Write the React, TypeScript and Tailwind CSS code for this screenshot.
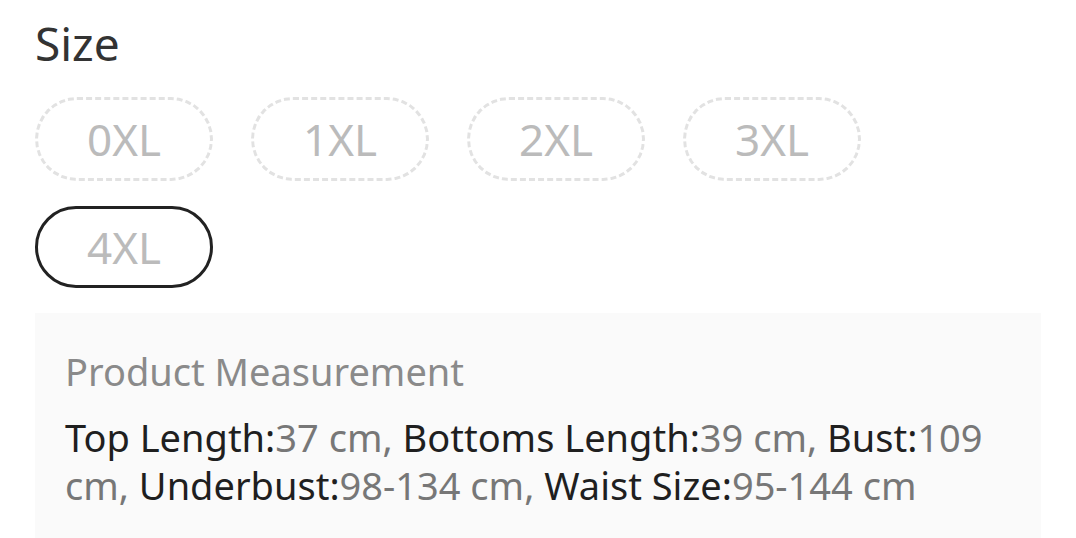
import React from "react";

const sizes = ["0XL", "1XL", "2XL", "3XL", "4XL"];

const parts: { label: string; value: string[] }[] = [
  { label: "Top Length:", value: ["37 cm,"] },
  { label: "Bottoms Length:", value: ["39 cm,"] },
  { label: "Bust:", value: ["109", "cm,"] },
  { label: "Underbust:", value: ["98-134 cm,"] },
  { label: "Waist Size:", value: ["95-144 cm"] },
];

export default function App() {
  return (
    <div
      className="w-[1076px] h-[538px] overflow-hidden bg-white pl-[35px] pr-[35px]"
      style={{ fontFamily: '"Noto Sans", "Open Sans", sans-serif' }}
    >
      <div className="pt-[12px] text-[46px] leading-[62px] text-[#333333]">Size</div>
      <div className="mt-[23px] flex flex-wrap gap-x-[38px] gap-y-[25px] w-[900px]">
        {sizes.map((s, i) => (
          <div
            key={s}
            className={
              i === 4
                ? "w-[178px] h-[82px] rounded-full border-[3px] border-solid border-[#222222] flex items-center justify-center text-[44px] text-[#bbbbbb]"
                : "w-[178px] h-[84px] rounded-full border-[3px] border-dashed border-[#e2e2e2] flex items-center justify-center text-[44px] text-[#bbbbbb]"
            }
          >
            {s}
          </div>
        ))}
      </div>
      <div className="mt-[25px] bg-[#fafafa] w-[1006px] h-[260px] px-[30px] pt-[30px]">
        <div className="text-[38px] leading-[56px] text-[#8a8a8a]">Product Measurement</div>
        <div className="mt-[14px] text-[38px] leading-[48px] text-[#777777]">
          {parts.map((p, i) => (
            <React.Fragment key={p.label}>
              <span className="text-[#1f1f1f]">{p.label}</span>
              {p.value.map((v, j) => (
                <React.Fragment key={j}>
                  <span>{v}</span>
                  {i < parts.length - 1 || j < p.value.length - 1 ? " " : null}
                </React.Fragment>
              ))}
            </React.Fragment>
          ))}
        </div>
      </div>
    </div>
  );
}
